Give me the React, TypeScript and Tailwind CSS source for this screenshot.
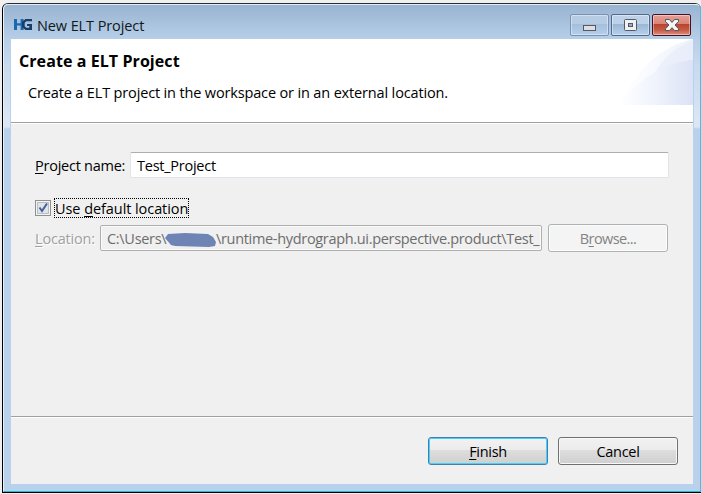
import React from "react";

function Logo() {
  return (
    <svg width="19" height="11" viewBox="0 0 19 12" preserveAspectRatio="none" className="mt-[14px] ml-[10px] shrink-0">
      <path d="M0 0h3v4.5h3.6V0h3v12h-3V7H3v5H0z" fill="#1b68b1" />
      <path d="M18 0h-6.5L8 3.2v5.6L11.5 12H18V5.5h-5v2.2h2.3v1.8h-3L10.7 8V4.1l1.7-1.6H18z" fill="#173d68" />
    </svg>
  );
}

function HeaderArt() {
  return (
    <svg width="74" height="66" viewBox="0 0 74 66" className="shrink-0">
      <defs>
        <linearGradient id="swoosh" x1="0" x2="1">
          <stop offset="0" stopColor="#fff" />
          <stop offset=".45" stopColor="#f8fafe" />
          <stop offset="1" stopColor="#edf1fb" />
        </linearGradient>
        <linearGradient id="hill" x1="0" x2="1">
          <stop offset="0" stopColor="#fff" />
          <stop offset=".5" stopColor="#eff3fc" />
          <stop offset="1" stopColor="#dce2f6" />
        </linearGradient>
      </defs>
      <path d="M0 66C18 31 40 8 74 0V66z" fill="url(#swoosh)" />
      <path d="M34 37C44 18 58 7 74 2V40z" fill="#e4ebf8" opacity=".6" />
      <path d="M0 66C20 40 45 23 74 21V66z" fill="url(#hill)" />
    </svg>
  );
}

function CaptionButtons() {
  const box = "h-[22px] w-[39px] rounded-[2px] border shadow-[inset_0_0_0_1px_rgba(255,255,255,.4)]";
  return (
    <div className="mt-[9px] ml-auto mr-[9px] flex gap-[2px]">
      <div className={box + " border-[#7891b4] bg-[linear-gradient(#b5cce4_0_45%,#a4bfdc_45%,#b5cee9)]"}>
        <svg width="37" height="20" shapeRendering="crispEdges">
          <rect x="12.5" y="10.5" width="12" height="5" fill="#dedede" stroke="#535766" />
        </svg>
      </div>
      <div className={box + " border-[#52698c] bg-[linear-gradient(#bdd2e8_0_45%,#99b6d5_45%,#b5d0ea)]"}>
        <svg width="37" height="20">
          <rect x="12.5" y="4.5" width="12" height="11" rx="1" fill="#f1f1f1" stroke="#535766" />
          <rect x="16.5" y="8.5" width="4" height="3" fill="#94afce" stroke="#535766" />
        </svg>
      </div>
      <div className={box + " border-[#4a1020] bg-[linear-gradient(#e3a096,#d98477_45%,#b8422c_45%,#c55a43_75%,#dc9180)]"}>
        <svg width="37" height="20">
          <path d="M12.5 4.5h4l2.5 3 2.5-3h4v2.2L22 10l3.5 3.8v1.7h-4L19 12.7l-2.5 2.8h-4v-1.7L16 10l-3.5-3.3z" fill="#f5f5f5" stroke="#535666" strokeLinejoin="round" />
        </svg>
      </div>
    </div>
  );
}

function Button({ className, children }: { className: string; children: React.ReactNode }) {
  return (
    <div className={"flex h-7 w-[120px] shrink-0 justify-center rounded-[3px] border pt-[4px] leading-5 tracking-[-0.3px] " + className}>
      {children}
    </div>
  );
}

export default function App() {
  return (
    <div className="h-[494px] w-[701px] overflow-hidden bg-[#f0f0f0] pt-[3px] pl-[2px] font-['Open_Sans','Noto_Sans',sans-serif] text-[14.5px] leading-5 tracking-[-0.15px] whitespace-pre text-black">
      <div className="flex h-[490px] w-[699px] flex-col rounded-t-[6px] border-t border-b border-l border-black border-t-[#292e35] bg-[#b9d1ea]">
        <div className="flex h-[488px] flex-col rounded-t-[5px] border-t border-r border-b border-l border-t-[#e4edf6] border-r-[#35c8ee] border-b-[#27b8d4] border-l-[#eaf2fb] bg-[linear-gradient(#99b4d1,#b7cfe9_35px,#c7daee_60px,#dbe7f5_122px,#b9d1ea_124px)]">
          <div className="flex h-[34px] shrink-0">
            <Logo />
            <span className="mt-[11px] ml-[4px] tracking-[-0.1px] text-[#101820]">New ELT Project</span>
            <CaptionButtons />
          </div>
          <div className="mx-[6px] flex h-[445px] w-[684px] shrink-0 flex-col border-x border-[#b9d1ea] bg-[#f0f0f0]">
            <div className="flex h-[84px] shrink-0 justify-between border-b border-[#a0a0a0] bg-white">
              <div className="flex flex-col">
                <h1 className="mt-[12px] ml-[8px] text-[16px] font-bold tracking-[0.08px]">Create a ELT Project</h1>
                <p className="mt-[12px] ml-[17px]">Create a ELT project in the workspace or in an external location.</p>
              </div>
              <HeaderArt />
            </div>
            <div className="flex h-[293px] shrink-0 flex-col border-t border-white pl-[24px]">
              <div className="mt-[28px] flex h-[26px]">
                <label className="mt-[4px] w-[95px] tracking-[-0.25px]"><u className="underline-offset-2">P</u>roject name:</label>
                <div className="w-[539px] rounded-[2px] border border-[#e2e3ea] border-t-[#abadb3] bg-white pt-[3px] pl-[6px]"><span className="tracking-[-0.25px]">Test_Project</span></div>
              </div>
              <div className="mt-[20px] flex h-5">
                <div className="mt-[2px] mr-[3px] size-4 border border-[#8e8f8f] bg-[#f4f4f4] p-px">
                  <svg width="12" height="12" viewBox="0 0 12 12">
                    <rect x=".5" y=".5" width="11" height="11" fill="#dfe4e9" stroke="#b8bec5" />
                    <path d="M2.5 5.5L5 9 10 1.5" fill="none" stroke="#485f9c" strokeWidth="2" />
                  </svg>
                </div>
                <div className="w-[135px] border border-dotted border-black leading-5"><span className="tracking-[-0.07px]">Use <u className="underline-offset-2">d</u>efault location</span></div>
              </div>
              <div className="mt-[6px] flex h-7 text-[#6d6d6d]">
                <label className="mt-[5px] w-[65px] tracking-[-0.2px] text-[#a0a0a0] [text-shadow:1px_1px_0_#fff]"><u className="underline-offset-2">L</u>ocation:</label>
                <div className="mt-px mr-[6px] flex h-[26px] w-[442px] rounded-[2px] border border-[#afafaf] pt-[3px] pl-[6px] shadow-[inset_0_0_0_1px_#fafafa]">
                  <span className="w-[58px] shrink-0 tracking-[-0.3px]">C:\Users\</span>
                  <svg width="51" height="14" viewBox="0 0 51 14" className="mt-[4px] shrink-0"><path d="M3 1L20 0 43 1 48 4 51 9 50 13 44 14 10 13 6 12 0 5z" fill="#6d84b4" /></svg>
                  <span className="shrink-0 tracking-[-0.32px]">\runtime-hydrograph.ui.perspective.product\Test_</span>
                </div>
                <Button className="border-[#adb2b5] bg-[#f4f4f4] text-[#838383] shadow-[inset_0_0_0_1px_#fcfcfc]"><span className="tracking-[-0.6px]">B<u className="underline-offset-2">r</u>owse...</span></Button>
              </div>
            </div>
            <div className="flex h-[68px] shrink-0 justify-end gap-[10px] border-t border-[#a0a0a0] pt-[20px] pr-[15px] shadow-[inset_0_1px_0_#fff]">
              <Button className="border-[#3c7fb1] bg-[linear-gradient(#f2f2f2,#ebebeb_48%,#dddddd_48%,#cfcfcf)] shadow-[inset_0_0_0_1px_#48d1f5]"><span><u className="underline-offset-2">F</u>inish</span></Button>
              <Button className="border-[#707070] bg-[linear-gradient(#f2f2f2,#ebebeb_48%,#dddddd_48%,#cfcfcf)] shadow-[inset_0_0_0_1px_#f8f8f8]"><span>Cancel</span></Button>
            </div>
          </div>
        </div>
      </div>
    </div>
  );
}
